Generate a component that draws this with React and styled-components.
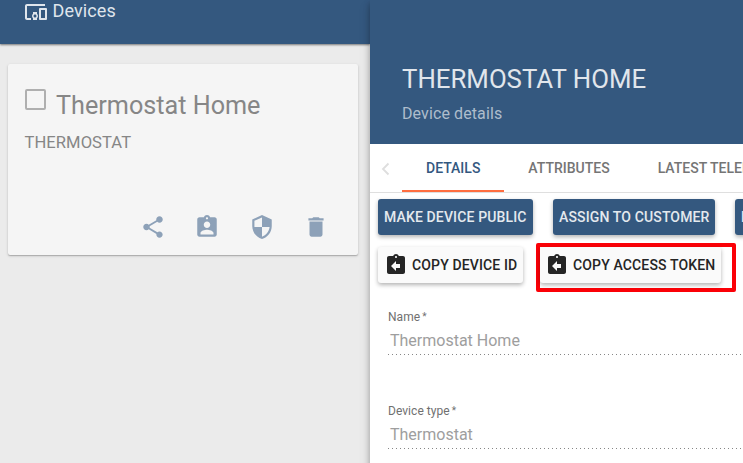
import React from "react";
import styled, { createGlobalStyle } from "styled-components";
import {
  MdDevicesOther,
  MdShare,
  MdAssignmentInd,
  MdSecurity,
  MdDelete,
  MdAssignmentReturn,
} from "react-icons/md";

const GlobalStyle = createGlobalStyle`
  *, *::before, *::after { box-sizing: border-box; }
  body {
    margin: 0;
    overflow: hidden;
    font-family: Roboto, "Liberation Sans", sans-serif;
    background: #ebebeb;
  }
  h1, h2, p { margin: 0; font-weight: 400; }
`;

const Page = styled.div`
  width: 743px;
  height: 463px;
  display: grid;
  grid-template-columns: 370px 373px;
  overflow: hidden;
`;

const ListPane = styled.main`
  display: flex;
  flex-direction: column;
  background: #ebebeb;
`;

const TopBar = styled.header`
  display: flex;
  align-items: flex-start;
  height: 44px;
  padding-left: 24px;
  background: #34587f;
  color: #dfe5ec;
  box-shadow: 0 1px 2px rgba(0, 0, 0, 0.5);
`;

const TopTitle = styled.span`
  margin-left: 4.5px;
  font-size: 18px;
  line-height: 22px;
  letter-spacing: 0.1px;
`;

const DeviceCard = styled.section`
  display: flex;
  flex-direction: column;
  width: 350px;
  height: 191px;
  margin: 20px 0 0 8px;
  padding: 25px 17px 0;
  border-radius: 2px;
  background: #f5f5f5;
  color: #868686;
  box-shadow: 0 1px 3px rgba(0, 0, 0, 0.16), 0 1px 1px rgba(0, 0, 0, 0.18);
`;

const CardHeader = styled.div`
  display: flex;
  align-items: flex-start;
  height: 40px;
`;

const Checkbox = styled.span`
  width: 21px;
  height: 21px;
  margin: -0.5px 0 0 -0.5px;
  border: 2px solid #afafaf;
  border-radius: 2px;
`;

const CardTitle = styled.h2`
  margin: 2px 0 0 10.5px;
  font-size: 25.2px;
  line-height: 30px;
`;

const CardType = styled.p`
  margin: 4px 0 0 -0.5px;
  font-size: 16.6px;
  letter-spacing: 0.05px;
  line-height: 20px;
`;

const CardActions = styled.div`
  display: flex;
  gap: 28.6px;
  margin: 61px 0 0 114.5px;
  color: #8da1b8;
`;

const DetailsPane = styled.aside`
  position: relative;
  min-width: 0;
  background: #fff;
  box-shadow: 0 3px 6px rgba(0, 0, 0, 0.28), 0 6px 12px rgba(0, 0, 0, 0.12);
`;

const DetailsHeader = styled.header`
  height: 144px;
  padding: 63px 0 0 32px;
  background: #34587f;
`;

const DetailsTitle = styled.h1`
  font-size: 25.8px;
  line-height: 32px;
  color: #e1e6ec;
`;

const DetailsSubtitle = styled.p`
  margin-top: 9px;
  font-size: 16px;
  line-height: 20px;
  letter-spacing: 0.1px;
  color: #aebdcc;
`;

const TabBar = styled.nav`
  display: flex;
  height: 49px;
  border-bottom: 1px solid #dfdfdf;
`;

const PageArrow = styled.span`
  flex: none;
  width: 32px;
  padding: 17px 0 0 11px;
  color: #dedede;
`;

const Tab = styled.span`
  flex: none;
  padding: 0 24px;
  height: 48px;
  font-size: 14px;
  line-height: 48px;
  font-weight: 500;
  white-space: nowrap;
  color: ${(p) => (p.$active ? "#34587f" : "#757575")};
  border-bottom: 2px solid ${(p) => (p.$active ? "#ff6e40" : "transparent")};
`;

const ButtonRow = styled.div`
  display: flex;
  align-items: flex-start;
  padding: ${(p) => p.$top}px 0 0 8px;
  gap: ${(p) => p.$gap}px;
`;

const Button = styled.button`
  flex: none;
  display: flex;
  align-items: center;
  width: ${(p) => p.$width}px;
  height: 36px;
  padding: 0 6px;
  border: 0;
  border-radius: 3px;
  font: 500 14px/36px Roboto, "Liberation Sans", sans-serif;
  letter-spacing: 0.14px;
  white-space: nowrap;
  color: ${(p) => (p.$light ? "#252525" : "#e4e9ee")};
  background: ${(p) => (p.$light ? "#fafafa" : "#34587f")};
  box-shadow: 0 2px 4px rgba(0, 0, 0, 0.3);
  svg { flex: none; margin-right: 4px; }
`;

const Highlight = styled.div`
  width: 200px;
  height: 49px;
  margin-top: -4px;
  border: 4px solid #fb0007;
  border-radius: 2px;
  ${Button} { padding-left: 5px; }
`;

const Field = styled.div`
  width: 400px;
  height: 94px;
  padding-left: 18px;
`;

const Label = styled.label`
  display: block;
  font-size: 12px;
  line-height: 16px;
  letter-spacing: 0.05px;
  color: #707070;
  span { margin-left: 2px; font-size: 10px; vertical-align: 1px; }
`;

const Value = styled.div`
  height: 30px;
  padding: 4px 0 0 2px;
  font-size: 16px;
  line-height: 24px;
  color: #9e9e9e;
  background: linear-gradient(to right, #868686 25%, transparent 25%) 0 100% / 4px 1px repeat-x;
`;

const Form = styled.form`
  padding-top: 17px;
`;

export default function App() {
  return (
    <>
      <GlobalStyle />
      <Page>
        <ListPane>
          <TopBar>
            <MdDevicesOther size={24} />
            <TopTitle>Devices</TopTitle>
          </TopBar>
          <DeviceCard>
            <CardHeader>
              <Checkbox />
              <CardTitle>Thermostat Home</CardTitle>
            </CardHeader>
            <CardType>THERMOSTAT</CardType>
            <CardActions>
              <MdShare size={26} />
              <MdAssignmentInd size={26} />
              <MdSecurity size={26} />
              <MdDelete size={26} />
            </CardActions>
          </DeviceCard>
        </ListPane>
        <DetailsPane>
          <DetailsHeader>
            <DetailsTitle>THERMOSTAT HOME</DetailsTitle>
            <DetailsSubtitle>Device details</DetailsSubtitle>
          </DetailsHeader>
          <TabBar>
            <PageArrow>
              <svg width="9" height="14" viewBox="0 0 9 14" fill="none" stroke="currentColor" strokeWidth="1.8">
                <path d="M7.5 1.5 2 7l5.5 5.5" />
              </svg>
            </PageArrow>
            <Tab $active>DETAILS</Tab>
            <Tab>ATTRIBUTES</Tab>
            <Tab>LATEST TELEMETRY</Tab>
          </TabBar>
          <ButtonRow $top={6} $gap={20}>
            <Button $width={155}>MAKE DEVICE PUBLIC</Button>
            <Button $width={162}>ASSIGN TO CUSTOMER</Button>
            <Button $width={160}>MANAGE CREDENTIALS</Button>
          </ButtonRow>
          <ButtonRow $top={12} $gap={13}>
            <Button $light $width={145}>
              <MdAssignmentReturn size={24} />
              COPY DEVICE ID
            </Button>
            <Highlight>
              <Button $light $width={181}>
                <MdAssignmentReturn size={24} />
                COPY ACCESS TOKEN
              </Button>
            </Highlight>
          </ButtonRow>
          <Form>
            <Field>
              <Label>Name<span>*</span></Label>
              <Value>Thermostat Home</Value>
            </Field>
            <Field>
              <Label>Device type<span>*</span></Label>
              <Value>Thermostat</Value>
            </Field>
          </Form>
        </DetailsPane>
      </Page>
    </>
  );
}
